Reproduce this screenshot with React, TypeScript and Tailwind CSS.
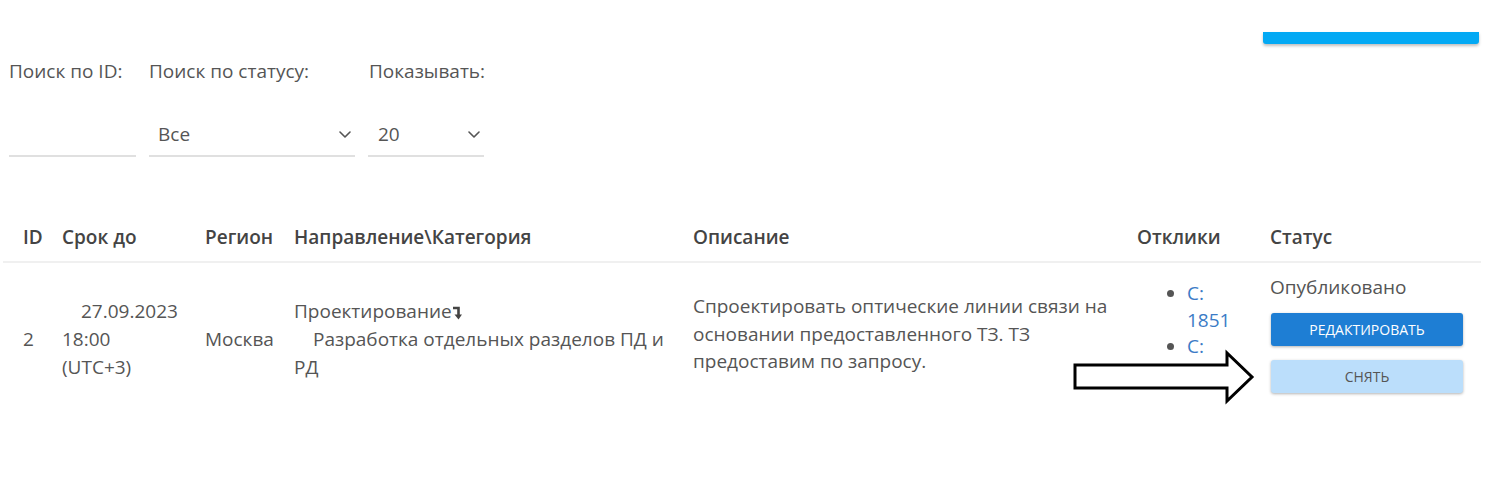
import React from "react";

const Chevron = () => (
  <svg width="12" height="7" viewBox="0 0 12 7" fill="none">
    <polyline points="1,1 6,6 11,1" stroke="#555" strokeWidth="1.6" strokeLinecap="round" strokeLinejoin="round" />
  </svg>
);

const CornerArrow = () => (
  <svg width="10" height="14" viewBox="0 0 10 14" className="inline-block align-[-2px]" fill="none">
    <path d="M1 2 H6.5 V10" stroke="#444" strokeWidth="2.6" />
    <path d="M2.5 8.5 L6.5 13.5 L10 8.5 Z" fill="#444" />
  </svg>
);

export default function App() {
  return (
    <div className="relative w-[1486px] h-[487px] overflow-hidden bg-white text-[#555] font-['Open_Sans',sans-serif] text-[19px]">
      <div className="flex justify-end pt-[32px] pr-[7px]">
        <div className="w-[216px] h-[12px] rounded-b-[3px] bg-[#03a9f4] shadow-[0_2px_3px_rgba(0,0,0,0.25)]" />
      </div>

      <div className="flex gap-[13px] pl-[9px] mt-[14px]">
        <div className="flex flex-col w-[127px]">
          <div className="leading-[27px] whitespace-nowrap">Поиск по ID:</div>
          <div className="mt-[31px] h-[41px] border-b-2 border-[#e0e0e0]" />
        </div>
        <div className="flex flex-col w-[206px]">
          <div className="leading-[27px] whitespace-nowrap">Поиск по статусу:</div>
          <div className="mt-[31px] h-[41px] border-b-2 border-[#e0e0e0] flex items-end justify-between pl-[9px] pr-[4px] pb-[7px]">
            <span className="leading-[27px]">Все</span>
            <span className="mb-[10px]"><Chevron /></span>
          </div>
        </div>
        <div className="flex flex-col w-[116px]">
          <div className="leading-[27px] whitespace-nowrap pl-[1px]">Показывать:</div>
          <div className="mt-[31px] h-[41px] border-b-2 border-[#e0e0e0] flex items-end justify-between pl-[10px] pr-[4px] pb-[7px]">
            <span className="leading-[27px]">20</span>
            <span className="mb-[10px]"><Chevron /></span>
          </div>
        </div>
      </div>

      <table className="table-fixed ml-[3px] mt-[55px] w-[1478px] border-collapse">
        <colgroup>
          <col className="w-[45px]" />
          <col className="w-[143px]" />
          <col className="w-[89px]" />
          <col className="w-[399px]" />
          <col className="w-[444px]" />
          <col className="w-[133px]" />
          <col className="w-[225px]" />
        </colgroup>
        <thead>
          <tr className="border-b-2 border-[#f0f0f0]">
            <th className="h-[50px] pl-[20px] text-left align-middle font-semibold text-[#444] leading-[28px]">ID</th>
            <th className="h-[50px] pl-[14px] text-left align-middle font-semibold text-[#444] leading-[28px]">Срок до</th>
            <th className="h-[50px] pl-[14px] text-left align-middle font-semibold text-[#444] leading-[28px]">Регион</th>
            <th className="h-[50px] pl-[14px] text-left align-middle font-semibold text-[#444] leading-[28px] whitespace-nowrap">Направление\Категория</th>
            <th className="h-[50px] pl-[14px] text-left align-middle font-semibold text-[#444] leading-[28px]">Описание</th>
            <th className="h-[50px] pl-[14px] text-left align-middle font-semibold text-[#444] leading-[28px]">Отклики</th>
            <th className="h-[50px] pl-[14px] text-left align-middle font-semibold text-[#444] leading-[28px]">Статус</th>
          </tr>
        </thead>
        <tbody>
          <tr>
            <td className="align-top pl-[20px] pt-[62px] leading-[28px]">2</td>
            <td className="align-top pl-[14px] pt-[34px] leading-[28px] whitespace-nowrap">
              <div className="pl-[19px]">27.09.2023</div>
              <div>18:00</div>
              <div>(UTC+3)</div>
            </td>
            <td className="align-top pl-[14px] pt-[62px] leading-[28px]">Москва</td>
            <td className="align-top pl-[14px] pt-[34px] leading-[28px] whitespace-nowrap">
              <div>Проектирование<CornerArrow /></div>
              <div className="pl-[19px]">Разработка отдельных разделов ПД и</div>
              <div>РД</div>
            </td>
            <td className="align-top pl-[14px] pt-[30px] leading-[27.5px] whitespace-nowrap">
              <div>Спроектировать оптические линии связи на</div>
              <div>основании предоставленного ТЗ. ТЗ</div>
              <div>предоставим по запросу.</div>
            </td>
            <td className="align-top pl-[14px] pt-[17px] leading-[26.7px]">
              <ul className="list-disc pl-[50px] text-[#3b7bc6] marker:text-[#555]">
                <li>С:<br />1851</li>
                <li>С:<br />1852</li>
              </ul>
            </td>
            <td className="align-top pl-[14px] pr-[18px] pt-[10px] pb-[23px]">
              <div className="leading-[28px]">Опубликовано</div>
              <div className="mt-[12px] ml-[1px] h-[33px] rounded-[3px] bg-[#1e7ed4] text-white text-[14px] flex items-center justify-center shadow-[0_1px_3px_rgba(0,0,0,0.3)]">
                РЕДАКТИРОВАТЬ
              </div>
              <div className="mt-[14px] ml-[1px] h-[33px] rounded-[3px] bg-[#bbdefb] text-[#555] text-[14px] flex items-center justify-center shadow-[0_1px_3px_rgba(0,0,0,0.3)]">
                СНЯТЬ
              </div>
            </td>
          </tr>
        </tbody>
      </table>

      <svg className="absolute left-[1070px] top-[348px]" width="190" height="60" viewBox="1070 348 190 60" fill="none">
        <polygon
          points="1075,365 1227,365 1227,353 1252,377 1227,401 1227,388 1075,388"
          fill="white"
          stroke="black"
          strokeWidth="3"
          strokeLinejoin="miter"
        />
      </svg>
    </div>
  );
}
